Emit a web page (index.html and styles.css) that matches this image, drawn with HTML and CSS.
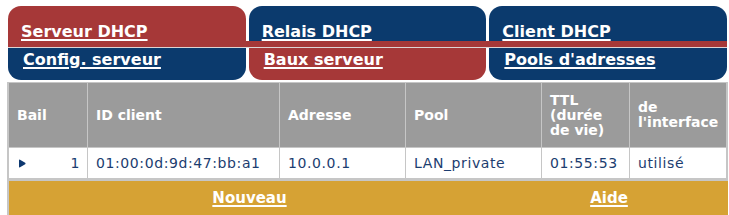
FILE: index.html
```html
<!DOCTYPE html>
<html lang="fr">
<head>
<meta charset="utf-8">
<title>Baux serveur DHCP</title>
<link rel="stylesheet" href="styles.css">
</head>
<body>
<div class="page">
  <div class="tabs-top">
    <a class="tab tab-top red" href="#">Serveur DHCP</a>
    <a class="tab tab-top blue" href="#">Relais DHCP</a>
    <a class="tab tab-top blue" href="#">Client DHCP</a>
  </div>
  <div class="tabs-sub">
    <a class="tab tab-sub blue" href="#">Config. serveur</a>
    <a class="tab tab-sub red" href="#">Baux serveur</a>
    <a class="tab tab-sub blue" href="#">Pools d'adresses</a>
  </div>
  <div class="panel">
    <table class="grid">
      <colgroup>
        <col class="c-bail"><col class="c-id"><col class="c-addr"><col class="c-pool"><col class="c-ttl"><col class="c-if">
      </colgroup>
      <thead>
        <tr>
          <th>Bail</th>
          <th>ID client</th>
          <th>Adresse</th>
          <th>Pool</th>
          <th>TTL (durée de vie)</th>
          <th class="last">de l'interface</th>
        </tr>
      </thead>
      <tbody>
        <tr>
          <td class="bail"><svg class="arrow" width="8" height="9" viewBox="0 0 8 9"><path d="M1 1.2 Q1 0.2 2 0.7 L7.2 3.8 Q8 4.5 7.2 5.2 L2 8.3 Q1 8.8 1 7.8 Z" fill="#0d3870"/></svg><span>1</span></td>
          <td>01:00:0d:9d:47:bb:a1</td>
          <td>10.0.0.1</td>
          <td>LAN_private</td>
          <td>01:55:53</td>
          <td class="last">utilisé</td>
        </tr>
      </tbody>
    </table>
    <div class="footer">
      <a href="#">Nouveau</a>
      <a href="#">Aide</a>
    </div>
  </div>
</div>
</body>
</html>
```
FILE: styles.css
```css
html, body {
  margin: 0;
  padding: 0;
  background: #ffffff;
}
body {
  font-family: "DejaVu Sans", Verdana, sans-serif;
  overflow: hidden;
}
.page {
  padding: 6px 0 0 7px;
  width: 721px;
}
.tabs-top {
  display: flex;
  gap: 3px;
  margin-left: 1px;
  width: 719px;
  border-bottom: 6px solid #a63838;
}
.tabs-sub {
  display: flex;
  gap: 3px;
  margin-left: 1px;
  width: 719px;
  border-top: 1px solid #ddd4d4;
}
.tab {
  flex: 1;
  box-sizing: border-box;
  color: #ffffff;
  font-weight: bold;
  font-size: 16px;
  line-height: 18px;
  text-decoration: underline;
  text-decoration-thickness: 2px;
  text-underline-offset: 2px;
  white-space: nowrap;
}
.tab-top {
  height: 35px;
  padding: 17px 0 0 13px;
  border-radius: 13px 13px 0 0;
}
.tab-sub {
  height: 32px;
  padding: 3px 0 0 15px;
  border-radius: 0 0 13px 13px;
}
.red { background: #a63838; }
.blue { background: #0b3a6d; }

.panel {
  margin-top: 2px;
  background: #c6c6c6;
  padding: 0 1px 0 1px;
  width: 719px;
  height: 140px;
}
.grid {
  table-layout: fixed;
  width: 719px;
  border-collapse: separate;
  border-spacing: 1px;
  font-size: 14px;
}
.c-bail { width: 78px; }
.c-id { width: 191px; }
.c-addr { width: 125px; }
.c-pool { width: 135px; }
.c-ttl { width: 87px; }
.c-if { width: 96px; }
.grid th {
  background: #9b9b9b;
  color: #ffffff;
  font-weight: bold;
  text-align: left;
  vertical-align: middle;
  height: 64px;
  padding: 0 4px 0 8px;
  line-height: 15px;
  box-sizing: border-box;
}
.grid th.last { padding-left: 8px; padding-right: 2px; }
.grid td {
  background: #ffffff;
  color: #1c3d70;
  height: 30px;
  padding: 0 4px 0 8px;
  box-sizing: border-box;
  letter-spacing: 0.6px;
  white-space: nowrap;
}
.grid td.bail {
  padding: 0 7px 0 9px;
}
.bail .arrow {
  float: left;
  margin-top: 4px;
}
.bail span {
  float: right;
}
.footer {
  margin-top: 2px;
  display: grid;
  grid-template-columns: 481px 1fr;
  background: #d6a234;
  height: 40px;
  margin-left: 1px;
  width: 719px;
}
.footer a {
  text-align: center;
  color: #ffffff;
  font-weight: bold;
  font-size: 15px;
  line-height: 34px;
  text-decoration: underline;
  text-decoration-thickness: 2px;
  text-underline-offset: 2px;
}
```
